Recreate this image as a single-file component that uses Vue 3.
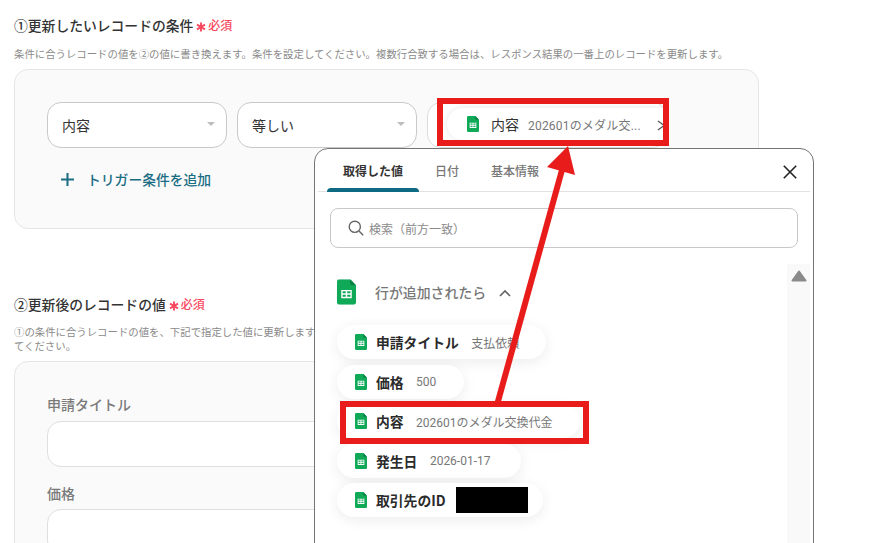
<script setup>
const pills = [
  { label: '申請タイトル', value: '支払依頼', width: 209 },
  { label: '価格', value: '500', width: 127 },
  { label: '内容', value: '202601のメダル交換代金', width: 243 },
  { label: '発生日', value: '2026-01-17', width: 184 },
  { label: '取引先のID', value: '', hidden: true, width: 206 },
]
</script>

<template>
  <div class="page">
    <section class="block first">
      <h2 class="title">①更新したいレコードの条件
        <svg class="star" viewBox="0 0 10 10"><path d="M5 .5v9M1 2.6l8 4.8M9 2.6L1 7.4" /></svg>
        <span class="req">必須</span>
      </h2>
      <p class="desc one">条件に合うレコードの値を②の値に書き換えます。条件を設定してください。複数行合致する場合は、レスポンス結果の一番上のレコードを更新します。</p>
      <div class="card card-top">
        <div class="cond-row">
          <div class="select"><span>内容</span><i class="caret"></i></div>
          <div class="select"><span>等しい</span><i class="caret"></i></div>
          <div class="value-box">
            <div class="value-pill">
              <svg class="sheet small" viewBox="0 0 18 24"><use href="#sheet-icon" /></svg>
              <b>内容</b><span>202601のメダル交...</span>
            </div>
            <svg class="pill-x" viewBox="0 0 10 12"><path d="M1 1l7 5-7 5" /></svg>
          </div>
        </div>
        <div class="add"><svg viewBox="0 0 14 14"><path d="M7 0v14M0 7h14" /></svg>トリガー条件を追加</div>
      </div>
    </section>

    <section class="block second">
      <h2 class="title">②更新後のレコードの値
        <svg class="star" viewBox="0 0 10 10"><path d="M5 .5v9M1 2.6l8 4.8M9 2.6L1 7.4" /></svg>
        <span class="req">必須</span>
      </h2>
      <p class="desc">①の条件に合うレコードの値を、下記で指定した値に更新します。更新しない項目は空欄のままにするか、値を入力して<br />てください。</p>
      <div class="card card-bottom">
        <label>申請タイトル</label>
        <div class="field"></div>
        <label>価格</label>
        <div class="field tight"></div>
      </div>
    </section>

    <aside class="popup">
      <div class="tabs">
        <div class="tab active">取得した値</div>
        <div class="tab">日付</div>
        <div class="tab">基本情報</div>
      </div>
      <svg class="close" viewBox="0 0 14 14"><path d="M.8.8l12.4 12.4M13.2.8L.8 13.2" /></svg>
      <div class="search">
        <svg viewBox="0 0 16 16"><circle cx="6.8" cy="6.8" r="5.6" /><path d="M11 11l4.2 4.2" /></svg>
        <span>検索（前方一致）</span>
      </div>
      <div class="list-wrap">
        <div class="list">
          <div class="group">
            <svg class="sheet big" viewBox="0 0 18 24"><use href="#sheet-icon" /></svg>
            <span>行が追加されたら</span>
            <svg class="chev" viewBox="0 0 12 8"><path d="M1 7l5-5 5 5" /></svg>
          </div>
          <div v-for="p in pills" :key="p.label" class="pill" :style="{ width: p.width + 'px' }">
            <svg class="sheet small" viewBox="0 0 18 24"><use href="#sheet-icon" /></svg>
            <b>{{ p.label }}</b>
            <span v-if="!p.hidden">{{ p.value }}</span>
            <i v-else class="redact"></i>
          </div>
        </div>
        <div class="scroll">
          <svg viewBox="0 0 16 12"><path d="M8 1.5L14.5 10.5H1.5Z" /></svg>
        </div>
      </div>
    </aside>

    <svg class="notes" viewBox="0 0 871 543">
      <rect x="440" y="101" width="226" height="42" />
      <rect x="343" y="404" width="243" height="37" />
      <path class="shaft" d="M497 405L562 170" />
      <path class="head" d="M568 146L547 167L575 175Z" />
    </svg>

    <svg width="0" height="0" class="defs">
      <defs>
        <symbol id="sheet-icon" viewBox="0 0 18 24">
          <path fill="#0fa958" d="M2 0h10.5L18 5.5V22a2 2 0 0 1-2 2H2a2 2 0 0 1-2-2V2a2 2 0 0 1 2-2z" />
          <path fill="#0a8044" d="M12.5 0L18 5.5h-4a1.5 1.5 0 0 1-1.5-1.5z" />
          <path fill="#fff" d="M4 10h10v8H4zm1.3 1.3v2h3v-2zm4.4 0v2h3v-2zm-4.4 3.3v2h3v-2zm4.4 0v2h3v-2z" fill-rule="evenodd" />
        </symbol>
      </defs>
    </svg>
  </div>
</template>

<style>
html, body { margin: 0; background: #fff; overflow: hidden; }
</style>

<style scoped>
.page {
  position: relative;
  width: 871px;
  height: 543px;
  overflow: hidden;
  background: #fff;
  padding: 15px 0 0 14px;
  box-sizing: border-box;
  font-family: "Noto Sans CJK JP", "Noto Sans", sans-serif;
  color: #333;
}
.block { width: 745px; }
.second { margin-top: 65px; }
.title {
  display: flex;
  align-items: center;
  margin: 0;
  height: 20px;
  font-size: 13.8px;
  font-weight: 500;
  color: #333;
  line-height: 20px;
}
.star { width: 10px; height: 10px; margin: 4px 2px 0 3px; }
.star path { stroke: #f8485e; stroke-width: 1.9; fill: none; }
.req { font-size: 12px; color: #f8485e; font-weight: 500; }
.desc {
  margin: 11px 0 0;
  font-size: 10.4px;
  line-height: 14px;
  color: #8a8a8a;
  white-space: nowrap;
}
.desc.one { margin-top: 12px; }
.card {
  margin-top: 8px;
  background: #fafafa;
  border: 1px solid #e6e6e6;
  border-radius: 14px;
  box-sizing: border-box;
  padding: 32px 32px 0;
}
.card-top { height: 160px; }
.card-bottom { height: 240px; margin-top: 8px; }
.cond-row { display: flex; gap: 10px; }
.select {
  flex: none;
  width: 180px;
  height: 46px;
  box-sizing: border-box;
  background: #fff;
  border: 1px solid #c9c9c9;
  border-radius: 14px;
  padding: 0 11px 0 14px;
  display: flex;
  align-items: center;
  justify-content: space-between;
  font-size: 14px;
  color: #333;
}
.caret {
  width: 0;
  height: 0;
  border-left: 4px solid transparent;
  border-right: 4px solid transparent;
  border-top: 4px solid #bdbdbd;
  margin-top: -2px;
}
.value-box {
  position: relative;
  flex: none;
  width: 240px;
  height: 46px;
  box-sizing: border-box;
  background: #fff;
  border: 1px solid #dcdcdc;
  border-radius: 14px;
  padding: 5px 0 0 19px;
  overflow: hidden;
}
.value-pill {
  width: 240px;
  height: 32px;
  box-sizing: border-box;
  border-radius: 17px;
  background: #fff;
  box-shadow: 0 0 6px rgba(0, 0, 0, 0.1);
  padding-left: 20px;
  display: flex;
  align-items: center;
  font-size: 14px;
}
.value-pill b { font-weight: 400; margin-left: 12px; color: #333; }
.value-pill span {
  font-family: Roboto, "Noto Sans CJK JP", sans-serif;
  font-size: 12px;
  color: #777;
  margin-left: 9px;
  letter-spacing: 0.2px;
}
.pill-x {
  position: absolute;
  right: 0;
  top: 17px;
  width: 9px;
  height: 11px;
}
.pill-x path { fill: none; stroke: #555; stroke-width: 1.4; }
.add {
  display: flex;
  align-items: center;
  gap: 13px;
  margin: 21px 0 0 14px;
  font-size: 13.8px;
  font-weight: 500;
  color: #1b6d84;
}
.add svg { width: 13px; height: 13px; }
.add path { stroke: #1b6d84; stroke-width: 2.2; fill: none; }
.card label {
  display: block;
  font-size: 14px;
  line-height: 20px;
  font-weight: 500;
  color: #7a7a7a;
}
.field {
  height: 46px;
  margin: 7px 0 16px;
  background: #fff;
  border: 1px solid #dedee3;
  border-radius: 14px;
  box-sizing: border-box;
}
.field.tight { margin-top: 6px; }
.popup {
  position: absolute;
  left: 314px;
  top: 148px;
  width: 500px;
  height: 420px;
  box-sizing: border-box;
  background: #fff;
  border: 1px solid #747474;
  border-radius: 14px;
}
.tabs {
  display: flex;
  height: 42px;
  margin: 0 3px;
  padding-left: 9px;
  border-bottom: 1px solid #e2e2e2;
}
.tab {
  height: 43px;
  box-sizing: border-box;
  padding: 14px 16px 0;
  font-size: 12px;
  line-height: 16px;
  font-weight: 500;
  color: #777;
}
.tab.active {
  color: #333;
  font-weight: 700;
  position: relative;
  width: 92px;
}
.tab.active::after {
  content: "";
  position: absolute;
  left: 0;
  right: 0;
  bottom: 0;
  height: 4px;
  background: #0d6a82;
  border-radius: 4px 4px 0 0;
}
.close {
  position: absolute;
  left: 468px;
  top: 16px;
  width: 14px;
  height: 14px;
}
.close path { stroke: #222; stroke-width: 1.6; fill: none; }
.search {
  margin: 16px 15px 0;
  height: 40px;
  box-sizing: border-box;
  border: 1px solid #c8c8c8;
  border-radius: 8px;
  padding-left: 17px;
  display: flex;
  align-items: center;
  gap: 5px;
  font-size: 12px;
  color: #8a8a8a;
}
.search svg { width: 16px; height: 16px; }
.search circle, .search path { fill: none; stroke: #666; stroke-width: 1.4; }
.list-wrap {
  display: flex;
  margin-top: 16px;
}
.list { flex: 1; padding-left: 22px; }
.group {
  display: flex;
  align-items: center;
  height: 26px;
  margin-top: 15px;
  margin-bottom: 20px;
  font-size: 13.9px;
  font-weight: 500;
  color: #777;
}
.sheet.big { width: 19px; height: 26px; margin-left: -0.5px; margin-right: 19.5px; }
.chev { width: 12px; height: 8px; margin-left: 13px; margin-top: 2px; }
.chev path { fill: none; stroke: #666; stroke-width: 1.7; }
.pill {
  display: flex;
  align-items: center;
  height: 34px;
  box-sizing: border-box;
  margin-bottom: 5.5px;
  padding-left: 18px;
  background: #fff;
  border-radius: 17px;
  box-shadow: 0 3px 14px rgba(0, 0, 0, 0.08);
}
.sheet.small { width: 12px; height: 16px; flex: none; }
.pill b {
  margin-left: 9px;
  font-size: 13.8px;
  font-weight: 700;
  color: #2b2b2b;
  white-space: nowrap;
}
.pill span {
  margin-left: 12.5px;
  font-family: Roboto, "Noto Sans CJK JP", sans-serif;
  font-size: 12px;
  color: #777;
  white-space: nowrap;
}
.redact {
  display: block;
  width: 72px;
  height: 26px;
  margin-left: 10px;
  background: #000;
}
.scroll {
  flex: none;
  width: 23px;
  height: 300px;
  margin-right: 3px;
  background: #f9f9f9;
  position: relative;
}
.scroll svg {
  position: absolute;
  left: 3.5px;
  top: 6px;
  width: 16px;
  height: 12px;
}
.scroll path { fill: #8a8a8a; stroke: #8a8a8a; stroke-width: 2; stroke-linejoin: round; }
.notes {
  position: absolute;
  left: 0;
  top: 0;
  width: 871px;
  height: 543px;
  pointer-events: none;
}
.notes rect { fill: none; stroke: #e91c1c; stroke-width: 6; }
.shaft { stroke: #e91c1c; stroke-width: 6; fill: none; }
.head { fill: #e91c1c; }
.defs { position: absolute; }
</style>
